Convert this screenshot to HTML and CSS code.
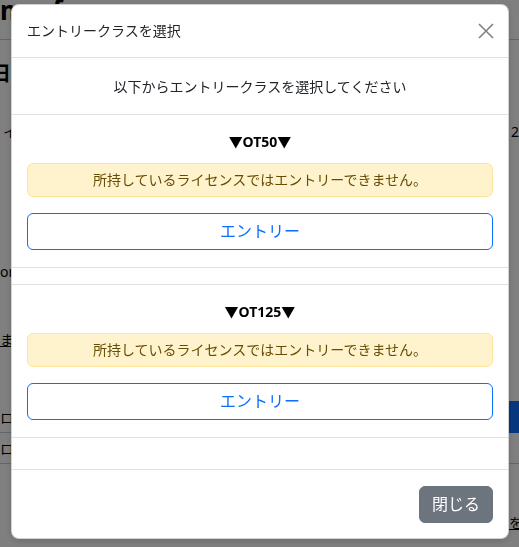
FILE: index.html
```html
<!DOCTYPE html>
<html lang="ja">
<head>
<meta charset="utf-8">
<title>エントリークラスを選択</title>
<link rel="stylesheet" href="styles.css">
</head>
<body>
<div class="page">
  <div class="page-title">m&nbsp;&nbsp;&nbsp;&nbsp;f&nbsp;&nbsp;:</div>
  <div class="page-date">日:</div>
  <div class="page-row"><span>イ</span><span>26</span></div>
  <div class="page-line page-or">or</div>
  <div class="page-line page-link">ま</div>
  <div class="page-list">
    <div class="page-item"><span>ロ</span><span class="page-btn"></span></div>
    <div class="page-item"><span>ロ</span></div>
  </div>
  <div class="page-foot"><span>日を</span></div>
</div>

<div class="backdrop">
  <div class="modal">
    <div class="modal-header">
      <div class="modal-title">エントリークラスを選択</div>
      <svg class="close" width="16" height="16" viewBox="0 0 16 16" aria-label="閉じる">
        <path d="M1 1 L15 15 M15 1 L1 15" stroke="#808080" stroke-width="1.6" fill="none"/>
      </svg>
    </div>
    <div class="intro">以下からエントリークラスを選択してください</div>
    <div class="entries">
      <div class="entry">
        <div class="entry-title">▼OT50▼</div>
        <div class="alert">所持しているライセンスではエントリーできません。</div>
        <button class="btn-entry">エントリー</button>
      </div>
      <div class="entry">
        <div class="entry-title">▼OT125▼</div>
        <div class="alert">所持しているライセンスではエントリーできません。</div>
        <button class="btn-entry">エントリー</button>
      </div>
    </div>
    <div class="modal-footer">
      <button class="btn-close">閉じる</button>
    </div>
  </div>
</div>
</body>
</html>
```

FILE: styles.css
```css
* { box-sizing: border-box; }

html, body {
  margin: 0;
  height: 100%;
  overflow: hidden;
}

body {
  font-family: "Noto Sans", "Noto Sans CJK JP", sans-serif;
  color: #212529;
  background: #fff;
}

/* background page */
.page {
  display: flex;
  flex-direction: column;
  height: 547px;
  color: #000;
}

.page-title {
  height: 46px;
  margin-top: -6px;
  font-size: 26px;
  font-weight: 700;
  line-height: 32px;
  border-bottom: 1px solid #ccc;
}

.page-date {
  margin-top: 22px;
  margin-left: -9px;
  font-size: 20px;
  font-weight: 700;
  line-height: 24px;
}

.page-row {
  display: flex;
  justify-content: space-between;
  margin-top: 36px;
  margin-right: -8px;
  padding-left: 3px;
  font-size: 14px;
  line-height: 20px;
}

.page-line {
  font-size: 14px;
  line-height: 20px;
}

.page-or { margin-top: 120px; }

.page-link {
  margin-top: 48px;
  text-decoration: underline;
}

.page-list {
  margin-top: 52px;
  display: flex;
  flex-direction: column;
}

.page-item {
  display: flex;
  justify-content: space-between;
  align-items: center;
  height: 31px;
  font-size: 14px;
  border-bottom: 1px solid #ccc;
}

.page-btn {
  width: 80px;
  height: 32px;
  background: #0d6efd;
}

.page-foot {
  margin-top: 48px;
  margin-right: -4px;
  display: flex;
  justify-content: flex-end;
  font-size: 14px;
  text-decoration: underline;
}

/* modal overlay */
.backdrop {
  position: fixed;
  inset: 0;
  background: rgba(0, 0, 0, 0.5);
  padding: 4px 10px 0 11px;
}

.modal {
  width: 498px;
  background: #fff;
  border: 1px solid rgba(0, 0, 0, 0.18);
  border-radius: 8px;
  box-shadow: 0 2px 6px rgba(0, 0, 0, 0.15);
  display: flex;
  flex-direction: column;
}

.modal-header {
  display: flex;
  justify-content: space-between;
  align-items: center;
  padding: 16px 14px 16px 15px;
  border-bottom: 1px solid #dee2e6;
}

.modal-title {
  font-size: 14px;
  line-height: 20px;
}

.close { display: block; }

.intro {
  padding: 18px 15px 17px;
  text-align: center;
  font-size: 14px;
  line-height: 21px;
  border-bottom: 1px solid #dee2e6;
}

.entries {
  display: flex;
  flex-direction: column;
  gap: 16px;
  margin-bottom: 31px;
}

.entry {
  display: flex;
  flex-direction: column;
  padding: 16px 15px 17px;
  border-bottom: 1px solid #dee2e6;
}

.entry + .entry { border-top: 1px solid #dee2e6; }

.entry-title {
  text-align: center;
  font-size: 14px;
  font-weight: 700;
  line-height: 21px;
  color: #000;
}

.alert {
  margin-top: 11px;
  padding: 6px 12px;
  text-align: center;
  font-size: 14px;
  line-height: 20px;
  color: #664d03;
  background: #fff3cd;
  border: 1px solid #ffe69c;
  border-radius: 6px;
}

.btn-entry {
  margin-top: 16px;
  padding: 6px 12px;
  font-family: inherit;
  font-size: 16px;
  line-height: 23px;
  color: #0d6efd;
  background: #fff;
  border: 1px solid #0d6efd;
  border-radius: 6px;
}

.modal-footer {
  display: flex;
  justify-content: flex-end;
  padding: 16px 15px 15px;
  border-top: 1px solid #dee2e6;
}

.btn-close {
  padding: 6px 12px;
  font-family: inherit;
  font-size: 16px;
  line-height: 23px;
  color: #fff;
  background: #6c757d;
  border: 1px solid #6c757d;
  border-radius: 6px;
}
```
